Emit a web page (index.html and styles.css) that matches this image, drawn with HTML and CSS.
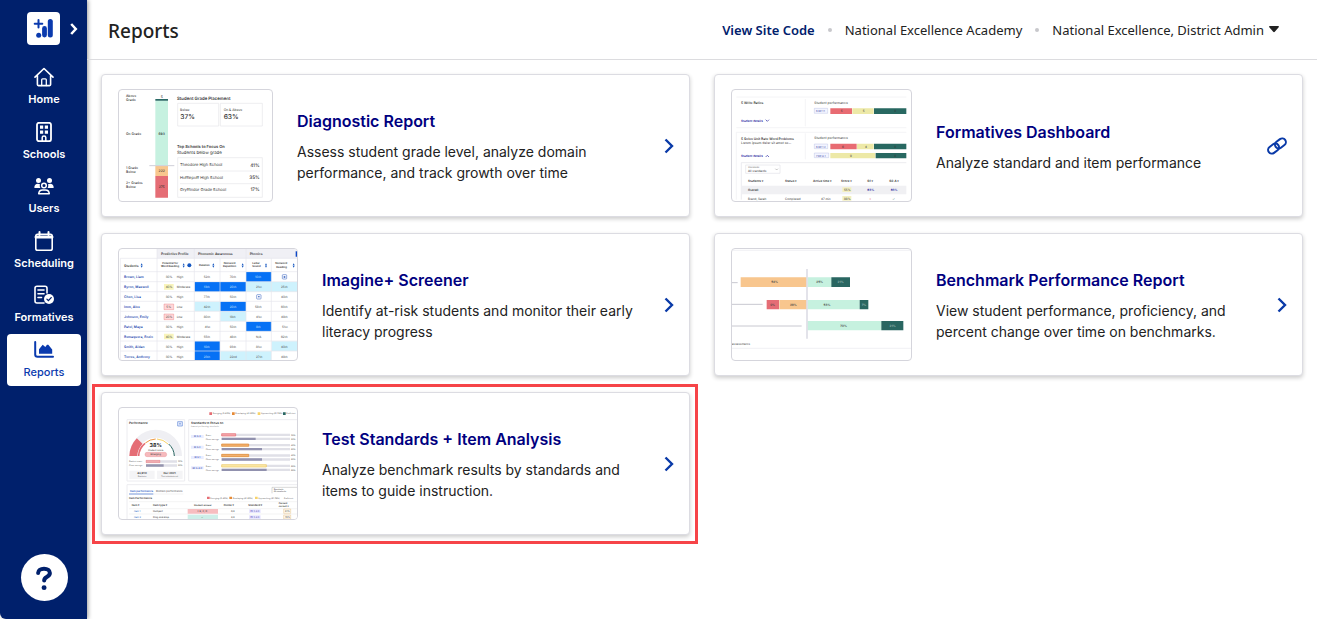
FILE: index.html
```html
<!DOCTYPE html>
<html lang="en">
<head>
<meta charset="utf-8">
<meta name="viewport" content="width=device-width, initial-scale=1">
<title>Reports</title>
<link rel="stylesheet" href="styles.css">
</head>
<body>
<div class="app">
  <aside class="sidebar">
    <div class="brand">
      <a class="logo" href="#" aria-label="Imagine">
        <svg viewBox="0 0 33 33" width="33" height="33" fill="none" stroke="#0a3aae" stroke-linecap="round">
          <path d="M11.500 8v7.500M7.700 11.700h7.600" stroke-width="2"/>
          <path d="M17.500 16.500v6.500" stroke-width="4.800"/>
          <path d="M23.300 9.500v13.500" stroke-width="5"/>
          <circle cx="11.700" cy="23.200" r="2.500" fill="#0a3aae" stroke="none"/>
        </svg>
      </a>
      <button class="expand" type="button" aria-label="Expand menu">
        <svg viewBox="0 0 8 12" width="8" height="12" fill="none" stroke="#fff" stroke-width="2.500"><path d="M1.200 1l4.600 5-4.600 5"/></svg>
      </button>
    </div>
    <nav>
      <ul class="menu">
        <li><a class="menu-item" href="#">
          <svg class="menu-icon" viewBox="0 0 20 20" fill="none" stroke="#fff" stroke-width="1.600" stroke-linejoin="round" stroke-linecap="round"><path d="M1 10.200L10 1.500l9 8.700M3.400 8.600v9c0 .7.300 1 1 1h11.200c.7 0 1-.3 1-1v-9"/><path d="M7.700 18.500v-5.700c0-.6.300-.9.900-.9h2.800c.6 0 .9.300.9.900v5.700" stroke-width="1.300"/></svg>
          <span>Home</span></a></li>
        <li><a class="menu-item" href="#">
          <svg class="menu-icon" viewBox="0 0 20 20" fill="none" stroke="#fff"><rect x="3" y=".8" width="14" height="18.400" rx="2" stroke-width="1.800"/><path d="M6 3.600h3.200v3.200H6zM10.800 3.600H14v3.200h-3.200zM6 8.600h3.200v3.200H6zM10.800 8.600H14v3.200h-3.200z" fill="#fff" stroke="none"/><path d="M8.200 19v-3.500c0-1 .8-1.500 1.800-1.500s1.800.500 1.800 1.500V19" stroke-width="1.500"/></svg>
          <span>Schools</span></a></li>
        <li><a class="menu-item" href="#">
          <svg class="menu-icon" viewBox="0 0 20 20" fill="#fff"><circle cx="4.500" cy="4.500" r="2.500"/><circle cx="15.500" cy="4.500" r="2.500"/><path d="M.3 11.500c0-2.500 1.500-3.800 3.500-3.800 1 0 1.600.2 2.200.6-.5 1.400-.3 2.500.4 3.600H.6zM19.700 11.500c0-2.500-1.500-3.800-3.500-3.800-1 0-1.600.2-2.200.6.500 1.400.3 2.500-.4 3.600h5.800z"/><circle cx="10" cy="9.500" r="2.300" fill="none" stroke="#fff" stroke-width="1.500"/><path d="M4.700 17.700c.3-2.500 1.700-3.600 3.800-3.600h3c2.100 0 3.500 1.100 3.800 3.600z" fill="none" stroke="#fff" stroke-width="1.500" stroke-linejoin="round"/></svg>
          <span>Users</span></a></li>
        <li><a class="menu-item" href="#">
          <svg class="menu-icon" viewBox="0 0 20 20" fill="none" stroke="#fff" stroke-width="1.600" stroke-linecap="round"><rect x="1.800" y="3.200" width="16.400" height="16" rx="1.800"/><path d="M2 6h16" stroke-width="3"/><path d="M5.500 1v3M14.500 1v3" stroke-width="2"/></svg>
          <span>Scheduling</span></a></li>
        <li><a class="menu-item" href="#">
          <svg class="menu-icon" viewBox="0 0 20 20" fill="none" stroke="#fff" stroke-width="1.600" stroke-linecap="round"><path d="M10 18H3c-1.200 0-2-.8-2-2V3.200C1 2 1.800 1.200 3 1.200h8c1.200 0 2 .8 2 2V8"/><path d="M4 5h6M4 8.700h6M4 12.500h3.500"/><circle cx="15" cy="14" r="5" fill="#fff" stroke="none"/><path d="M12.900 14.100l1.500 1.500 2.800-3" stroke="#00206c" stroke-width="1.300"/></svg>
          <span>Formatives</span></a></li>
        <li><a class="menu-item menu-item-active" href="#" aria-current="page">
          <svg class="menu-icon" viewBox="0 0 20 20" fill="none"><path d="M1.200 2v12.500c0 1.500.8 2.300 2.300 2.300H19" stroke="#0a3aae" stroke-width="2" stroke-linecap="round"/><path d="M5 13.800V9.200l3.700-4.400 2.600 2.300 1.700-2.300h1.300l3.900 4.800v4.200z" fill="#0a3aae"/></svg>
          <span>Reports</span></a></li>
      </ul>
    </nav>
    <button class="help" type="button" aria-label="Help">
      <svg viewBox="0 0 24 28" width="22" height="26" fill="none" stroke="#00206c" stroke-width="4.400" stroke-linecap="round" stroke-linejoin="round"><path d="M5.600 8.600c0-3 2.600-4.800 6.400-4.800s6.400 2 6.400 4.800c0 2.300-1.500 3.300-3.400 4.400-1.900 1.100-2.800 1.800-2.800 3.800"/><circle cx="12.100" cy="24.500" r="2.700" fill="#00206c" stroke="none"/></svg>
    </button>
  </aside>

  <div class="page">
    <header class="topbar">
      <h1>Reports</h1>
      <div class="account">
        <a class="site-code" href="#">View Site Code</a>
        <span class="dot"></span>
        <span>National Excellence Academy</span>
        <span class="dot"></span>
        <button class="user-menu" type="button">National Excellence, District Admin
          <svg viewBox="0 0 10 7" width="10" height="7" fill="#222"><path d="M.8 0h8.400c.7 0 1 .7.500 1.200L5.800 5.800c-.4.500-1.200.500-1.600 0L.3 1.200C-.2.7.1 0 .8 0z"/></svg>
        </button>
      </div>
    </header>

    <main class="reports">
      <a class="card" href="#">
        <svg class="thumb thumb-narrow" viewBox="27 30 459 333" aria-hidden="true">
          <g font-size="10" font-weight="500" fill="#333">
            <text x="48" y="51">Above</text><text x="48" y="64">Grade</text>
            <text x="48" y="164">On Grade</text>
            <text x="48" y="266">1 Grade</text><text x="48" y="279">Below</text>
            <text x="48" y="312">2+ Grades</text><text x="48" y="325">Below</text>
          </g>
          <path fill="#c6f1e0" d="M136 62h38v195h-38z"/><path fill="#2a6a66" d="M136 57h38v5h-38z"/>
          <path fill="#f8c78e" d="M136 258h38v30h-38z"/><path fill="#e56d75" d="M136 288h38v65h-38z"/>
          <path stroke="#cfcfd8" stroke-width="3" d="M118 257h75"/>
          <g font-size="10" font-weight="500" fill="#333" text-anchor="middle"><text x="155" y="54">5</text><text x="155" y="164">693</text><text x="155" y="276">222</text><text x="155" y="325">275</text></g>
          <g fill="#fff" stroke="#e6e6ea" stroke-width="2"><path d="M203 70h123v68H203zM331 70h126v68H331zM203 233h254v119H203z"/><path d="M210 273h240M210 311h240"/></g>
          <g fill="#333"><text x="201" y="61" font-size="13" font-weight="600">Student Grade Placement</text><text x="210" y="94" font-size="10">Below</text><text x="341" y="94" font-size="10">On &amp; Above</text>
          <text x="211" y="118" font-size="20" font-weight="500">37%</text><text x="341" y="118" font-size="20" font-weight="500">63%</text>
          <text x="201" y="203" font-size="12" font-weight="600">Top Schools to Focus On</text><text x="201" y="221" font-size="13">Students below grade</text></g>
          <g font-size="12" fill="#333"><text x="210" y="259">Theodore High School</text><text x="210" y="296">Hufflepuff High School</text><text x="210" y="333">Gryffindor Grade School</text></g>
          <g font-size="14" font-weight="500" fill="#333" text-anchor="end"><text x="449" y="260">41%</text><text x="449" y="297">35%</text><text x="449" y="334">17%</text></g>
        </svg>
        <div class="card-text"><h2>Diagnostic Report</h2><p>Assess student grade level, analyze domain performance, and track growth over time</p></div>
        <svg class="chevron" viewBox="0 0 10 16"><path d="M1.500 1.500L8 8l-6.500 6.500"/></svg>
      </a>

      <a class="card" href="#">
        <svg class="thumb thumb-wide" viewBox="21 30 537 333" aria-hidden="true">
          <path stroke="#eeeef2" stroke-width="2" d="M34 51h510M34 143h510M34 157h510M34 157v202M241 57v82M241 160v78" fill="none"/>
          <g font-size="10" font-weight="600" fill="#333"><text x="48" y="73">5 Write Ratios</text><text x="48" y="179">5 Solve Unit Rate Word Problems</text><text x="48" y="192" font-weight="400">Lorem ipsum dolor sit amet ex...</text></g>
          <g font-size="10" fill="#333"><text x="268" y="71">Student performance</text><text x="268" y="178">Student performance</text></g>
          <g font-size="9" font-weight="600" fill="#2525a0"><text x="48" y="125">Student details</text><text x="48" y="232">Student details</text></g>
          <g fill="none" stroke="#2525a0" stroke-width="2"><path d="M122 119l5 5 5-5M122 231l5-5 5 5"/></g>
          <g fill="#f3f5ff" stroke="#a4addb"><path d="M268 85h40v15h-40zM268 192h40v14h-40zM268 219h43v14h-43z"/></g>
          <g font-size="8" fill="#3a4aa5"><text x="273" y="96">6.RP.1.1</text><text x="273" y="203">6.RP.1.2</text><text x="273" y="230">7.RP.A.1</text></g>
          <path fill="#e86b72" d="M316 85h65v17h-65zM316 191h79v17h-79z"/><path fill="#ede9a7" d="M382 85h64v17h-64zM396 191h50v17h-50zM316 219h135v16H316z"/><path fill="#286861" d="M447 85h97v17h-97zM447 191h97v17h-97zM452 219h92v16h-92z"/>
          <g font-size="9" fill="#333"><text x="347" y="97">5</text><text x="413" y="97">5</text><text x="508" y="97">9</text><text x="351" y="203">6</text><text x="420" y="203">4</text><text x="508" y="203">9</text><text x="375" y="230">9</text><text x="508" y="230">8</text></g>
          <path fill="#fff" stroke="#e2e2e8" stroke-width="2" d="M49 248h495M49 248v111M62 255h103v25H62z"/>
          <text x="69" y="264" font-size="7" fill="#777">Standards</text><text x="69" y="275" font-size="9" fill="#333">All standards</text><path d="M151 266l4 4 4-4" fill="none" stroke="#555"/>
          <path fill="#f0f0f3" d="M50 317h494v26H50z"/><path fill="#f3efc0" d="M352 322h27v14h-27zM352 348h27v14h-27z"/>
          <g font-size="9" font-weight="600" fill="#333"><text x="69" y="307">Students ▾</text><text x="180" y="307">Status ▾</text><text x="264" y="307">Active time ▾</text><text x="348" y="307">Score ▾</text><text x="427" y="307">G1 ▾</text><text x="493" y="307">G2.A ▾</text><text x="69" y="332">Overall</text></g>
          <g font-size="9" fill="#333"><text x="357" y="333">55%</text><text x="69" y="359">Brand, Sarah</text><text x="180" y="359">Completed</text><text x="288" y="359">47 min</text><text x="357" y="359">88%</text><g fill="#2525a0" font-weight="600"><text x="427" y="332">63%</text><text x="497" y="332">63%</text></g><text x="433" y="359" fill="#d33">×</text><text x="502" y="359" fill="#286861">✓</text></g>
        </svg>
        <div class="card-text"><h2>Formatives Dashboard</h2><p>Analyze standard and item performance</p></div>
        <svg class="link-icon" viewBox="0 0 20 16"><g transform="rotate(-37 10 8)"><rect x="-.2" y="4.300" width="11.800" height="7.400" rx="3.700"/><rect x="8.400" y="4.300" width="11.800" height="7.400" rx="3.700"/></g></svg>
      </a>

      <a class="card" href="#">
        <svg class="thumb" viewBox="27 27 534 333" aria-hidden="true">
          <path fill="#f0f0f5" d="M141 27h420v28H141z"/><path fill="#0d47c7" d="M557 34h6v16h-6z"/>
          <path fill="#0671f5" d="M408 96h76v29h-76zM254 126h154v29H254zM331 185h77v29h-77zM408 245h76v29h-76zM254 304h76v56h-76z"/>
          <path fill="#cef2fd" d="M408 126h153v29H408zM254 185h76v29h-76zM331 215h77v29h-77zM485 304h76v29h-76zM331 334h153v26H331z"/>
          <path fill="none" stroke="#e5e5ed" stroke-width="2" d="M31 55h530M31 95h530M31 125h530M31 155h530M31 184h530M31 214h530M31 244h530M31 274h530M31 303h530M31 333h530M141 27v333M253 27v333M330 55v305M408 27v333M484 55v305M31 55v305"/>
          <g font-size="10" font-weight="600" fill="#333"><text x="153" y="44">Predictive Profile</text><text x="264" y="44">Phonemic Awareness</text><text x="419" y="44">Phonics</text><text x="42" y="80">Students</text></g>
          <g font-size="8" font-weight="600" fill="#333"><text x="157" y="72">Potential for</text><text x="153" y="82">Word Reading</text><text x="267" y="79">Deletion</text><text x="341" y="72">Nonword</text><text x="339" y="82">Repetition</text><text x="427" y="72">Letter</text><text x="427" y="82">Sound</text><text x="496" y="73">Nonword</text><text x="499" y="83">Reading</text></g>
          <g fill="#1456c0"><circle cx="238" cy="76" r="6"/><path d="M92 76l3-6 3 6zm0 1l3 6 3-6zM218 76l3-6 3 6zm0 1l3 6 3-6zM307 76l3-6 3 6zm0 1l3 6 3-6zM395 76l3-6 3 6zm0 1l3 6 3-6zM465 76l3-6 3 6zm0 1l3 6 3-6zM548 76l3-6 3 6zm0 1l3 6 3-6z"/></g>
          <g font-size="10" font-weight="600" fill="#2348ad"><text x="42" y="115">Brown, Liam</text><text x="42" y="144">Byron, Maxwell</text><text x="42" y="174">Chen, Lisa</text><text x="42" y="204">Imm, Alex</text><text x="42" y="233">Johnson, Emily</text><text x="42" y="263">Patel, Maya</text><text x="42" y="293">Remaquera, Enzio</text><text x="42" y="323">Smith, Aidan</text><text x="42" y="353">Torres, Anthony</text></g>
          <path fill="#f8f4bb" d="M162 132h29v17h-29zM162 281h29v17h-29z"/><path fill="#ffd7d8" stroke="#e5686e" d="M162 192h29v17h-29zM162 222h29v17h-29z"/>
          <g font-size="9" fill="#444"><text x="167" y="114">30%</text><text x="200" y="114">High</text><text x="167" y="144">40%</text><text x="200" y="144">Moderate</text><text x="167" y="174">30%</text><text x="200" y="174">High</text><text x="169" y="204">5%</text><text x="200" y="204">Low</text><text x="167" y="233">20%</text><text x="200" y="233">Low</text><text x="167" y="263">30%</text><text x="200" y="263">High</text><text x="167" y="293">40%</text><text x="200" y="293">Moderate</text><text x="167" y="323">30%</text><text x="200" y="323">High</text><text x="167" y="353">30%</text><text x="200" y="353">High</text>
          <text x="281" y="114">52th</text><text x="359" y="114">70th</text><text x="281" y="174">77th</text><text x="359" y="174">50th</text><text x="281" y="204">42th</text><text x="281" y="233">80th</text><text x="359" y="233">18th</text><text x="284" y="263">41st</text><text x="359" y="263">50th</text><text x="281" y="293">55th</text><text x="359" y="293">48th</text><text x="359" y="323">93th</text><text x="359" y="353">22nd</text>
          <text x="438" y="144">21st</text><text x="435" y="204">58th</text><text x="438" y="233">41st</text><text x="438" y="293">N/A</text><text x="438" y="323">81st</text><text x="438" y="353">27th</text><text x="513" y="144">25th</text><text x="513" y="174">40th</text><text x="513" y="204">63th</text><text x="513" y="233">49th</text><text x="516" y="263">51st</text><text x="513" y="293">62th</text><text x="513" y="323">40th</text><text x="513" y="353">49th</text></g>
          <g font-size="9" fill="#d6e8ff"><text x="435" y="114">10th</text><text x="281" y="144">13th</text><text x="359" y="144">20th</text><text x="359" y="204">20th</text><text x="438" y="263">8th</text><text x="281" y="323">10th</text><text x="281" y="353">23th</text></g>
          <g fill="none" stroke="#2756ba" stroke-width="1.500"><rect x="517" y="104" width="13" height="13" rx="2"/><rect x="440" y="164" width="13" height="13" rx="2"/></g><path fill="#2756ba" d="M521 109h5v4h-5zM444 169h5v3h-5z"/>
        </svg>
        <div class="card-text"><h2>Imagine+ Screener</h2><p>Identify at-risk students and monitor their early literacy progress</p></div>
        <svg class="chevron" viewBox="0 0 10 16"><path d="M1.500 1.500L8 8l-6.500 6.500"/></svg>
      </a>

      <a class="card" href="#">
        <svg class="thumb thumb-wide" viewBox="21 27 537 333" aria-hidden="true">
          <path stroke="#c8c8d0" stroke-width="3" d="M21 128h17M21 193h92M21 258h209"/>
          <path fill="#f8c68e" d="M47 112h199v29H47zM163 180h83v28h-83z"/><path fill="#c6f1df" d="M247 112h72v29h-72zM247 180h157v28H247zM247 243h222v28H247z"/>
          <path fill="#296661" d="M319 112h56v29h-56zM404 180h26v28h-26zM469 243h66v28h-66z"/><path fill="#e56d75" d="M125 180h37v28h-37z"/>
          <path stroke="#dedee6" stroke-width="5" d="M246 87v209"/><path stroke="#e9e9ee" stroke-width="2" d="M21 325h537M21 31h537"/>
          <g font-size="9" font-weight="600" fill="#444" text-anchor="middle"><text x="149" y="130">54%</text><text x="284" y="130">25%</text><text x="205" y="198">20%</text><text x="143" y="198">9%</text><text x="306" y="198">53%</text><text x="356" y="260">79%</text><g fill="#9fbab8"><text x="347" y="130">21%</text><text x="417" y="198">7%</text><text x="503" y="260">21%</text></g></g>
          <text x="20" y="316" font-size="9" fill="#444">assessments</text>
        </svg>
        <div class="card-text"><h2>Benchmark Performance Report</h2><p>View student performance, proficiency, and percent change over time on benchmarks.</p></div>
        <svg class="chevron" viewBox="0 0 10 16"><path d="M1.500 1.500L8 8l-6.500 6.500"/></svg>
      </a>

      <a class="card card-highlight" href="#">
        <svg class="thumb" viewBox="27 24 534 333" aria-hidden="true">
          <g fill="#fff" stroke="#ececf0" stroke-width="3"><path d="M51 59h173v184H51zM236 59h330v184H236zM51 254h515v110H51z"/></g>
          <path fill="#e56d75" d="M298 37h8v8h-8zM291 290h8v7h-8z"/><path fill="#e68a37" d="M366 37h8v8h-8zM358 290h8v7h-8z"/><path fill="#f7d36a" d="M443 37h8v8h-8zM435 290h8v7h-8z"/><path fill="#296661" d="M519 37h8v8h-8z"/>
          <g font-size="6" fill="#444"><text x="308" y="43">Emerging (0-40%)</text><text x="376" y="43">Developing (41-60%)</text><text x="453" y="43">Approaching (61-79%)</text><text x="529" y="43">Proficient</text><text x="301" y="296">Emerging (0-40%)</text><text x="368" y="296">Developing (41-60%)</text><text x="445" y="296">Approaching (61-79%)</text><text x="522" y="296">Proficient</text></g>
          <g font-size="9" font-weight="600" fill="#333"><text x="57" y="73">Performance</text><text x="243" y="73">Standards to Focus on</text><text x="57" y="296" font-size="8">Item Performance</text></g><text x="243" y="81" font-size="6" fill="#777">Lowest performing standards</text>
          <path fill="#e9efff" stroke="#618ad6" stroke-width="2" d="M203 65h14v13h-14z"/><path d="M210 68v7M207 71h6" stroke="#2962c8"/>
          <path d="M70 168a67 67 0 01134 0" fill="none" stroke="#efeff3" stroke-width="24"/>
          <path d="M70 168a67 67 0 0119-45" fill="none" stroke="#e56d75" stroke-width="24"/>
          <g fill="none" stroke-width="3"><path d="M86 168a51 51 0 0119-38" stroke="#e56d75" stroke-width="5"/><path d="M106 129a51 51 0 0131-12" stroke="#ed9844"/><path d="M141 117a51 51 0 0133 15" stroke="#f7d36a"/><path d="M176 132a51 51 0 0117 36" stroke="#296661"/></g>
          <text x="137" y="141" font-size="16" font-weight="700" text-anchor="middle" fill="#222">38%</text><text x="137" y="152" font-size="7" text-anchor="middle" fill="#444">Student score</text>
          <rect x="105" y="157" width="65" height="13" rx="6" fill="#f6b9bc" stroke="#e48287"/><text x="137" y="166" font-size="7" text-anchor="middle" fill="#333">Emerging</text>
          <g font-size="6" fill="#444"><text x="57" y="187">Student score</text><text x="57" y="199">Class average</text><text x="204" y="187">38%</text><text x="204" y="199">50%</text></g>
          <path fill="#e0e0e8" d="M108 181h93v7h-93zM108 193h93v7h-93z"/><path fill="#f0adb0" stroke="#e56d75" d="M108 181h42v7h-42z"/><path fill="#9494ae" d="M108 193h53v7h-53z"/>
          <path fill="#f4f4f6" d="M58 212h76v25H58zM141 212h77v25h-77z"/>
          <g font-size="8" font-weight="600" text-anchor="middle" fill="#333"><text x="96" y="222">43,850</text><text x="179" y="222">Dec 2025</text></g><g font-size="6" text-anchor="middle" fill="#444"><text x="96" y="231">Students</text><text x="179" y="231">Test administered</text></g>
          <path fill="#e8ecff" d="M243 105h38v9h-38zM243 137h38v9h-38zM243 168h38v9h-38zM243 199h38v9h-38z"/>
          <g font-size="7" font-weight="600" text-anchor="middle" fill="#3c4faf"><text x="262" y="112">RI.5.2</text><text x="262" y="144">RI.5.3</text><text x="262" y="175">RI.5.1</text><text x="262" y="206">RF.5.4.C</text></g>
          <g font-size="6" fill="#444"><text x="287" y="107">Score</text><text x="287" y="119">Class average</text><text x="287" y="138">Score</text><text x="287" y="150">Class average</text><text x="287" y="169">Score</text><text x="287" y="181">Class average</text><text x="287" y="200">Score</text><text x="287" y="212">Class average</text><text x="543" y="107">25%</text><text x="543" y="119">50%</text><text x="543" y="138">40%</text><text x="543" y="150">60%</text><text x="543" y="169">40%</text><text x="543" y="181">60%</text><text x="543" y="200">65%</text><text x="543" y="212">65%</text></g>
          <path fill="#e0e0e7" d="M335 101h205v7H335zM335 113h205v7H335zM335 132h205v7H335zM335 144h205v7H335zM335 163h205v7H335zM335 175h205v7H335zM335 194h205v7H335zM335 206h205v7H335z"/>
          <path fill="#f4a7aa" stroke="#e56d75" stroke-width="2" d="M335 101h42v7h-42z"/><path fill="#f2b06e" stroke="#dd872e" stroke-width="2" d="M335 132h81v7h-81zM335 163h81v7h-81z"/><path fill="#fbe9a9" stroke="#efc864" stroke-width="2" d="M335 194h134v7H335z"/><path fill="#9191ae" d="M335 113h102v7H335zM335 144h121v7H335zM335 175h121v7H335zM335 206h135v7H335z"/>
          <text x="60" y="275" font-size="8" font-weight="600" fill="#2458c4">Item performance</text><text x="138" y="275" font-size="8" fill="#444">Domain performance</text><path stroke="#2d62c6" stroke-width="2" d="M57 282h73"/><path stroke="#ddd" d="M130 282h90M57 305h504M57 326h504M57 342h504"/>
          <path fill="none" stroke="#888" d="M486 262h75M486 262v18"/><text x="491" y="269" font-size="6">Standards</text><text x="491" y="277" font-size="6">All standards</text>
          <g font-size="8" font-weight="600" fill="#333"><text x="65" y="318">Item ▾</text><text x="129" y="318">Item type ▾</text><text x="252" y="318" font-size="7">Student answer</text><text x="341" y="318">Points ▾</text><text x="415" y="318">Standard ▾</text><text x="506" y="313" font-size="7">Percent</text><text x="506" y="322" font-size="7">correct ▾</text></g>
          <path fill="#f7bdc0" d="M233 327h91v14h-91z"/><path fill="#ceefe9" d="M233 344h91v13h-91z"/><path fill="#e8e6ff" d="M417 328h35v11h-35zM417 346h35v11h-35z"/><path fill="#fffaf0" stroke="#dfa657" d="M521 327h21v13h-21zM521 345h21v12h-21z"/>
          <g font-size="7" fill="#333"><text x="72" y="336" fill="#245ac0">Item 1</text><text x="72" y="354" fill="#245ac0">Item 2</text><text x="129" y="336">Multipart</text><text x="129" y="354">Drag and drop</text><text x="262" y="336">× B, C, D</text><text x="274" y="354">✓</text><text x="363" y="336">0/2</text><text x="363" y="354">2/2</text><text x="421" y="336" fill="#4c42b1">RF.5.4.C</text><text x="421" y="354" fill="#4c42b1">RF.5.4.C</text><text x="525" y="336">61%</text><text x="525" y="354">70%</text></g>
        </svg>
        <div class="card-text"><h2>Test Standards + Item Analysis</h2><p>Analyze benchmark results by standards and items to guide instruction.</p></div>
        <svg class="chevron" viewBox="0 0 10 16"><path d="M1.500 1.500L8 8l-6.500 6.500"/></svg>
      </a>
    </main>
  </div>
</div>
</body>
</html>
```
FILE: styles.css
```css
* { box-sizing: border-box; }
body { margin: 0; background: #fff; color: #222; font-family: Inter, "Liberation Sans", sans-serif; }
button { border: 0; padding: 0; background: none; color: inherit; font: inherit; cursor: pointer; }
a { color: inherit; text-decoration: none; }
h1, h2, p { margin: 0; }
svg { display: block; }

.app { display: flex; min-height: 100vh; }
.sidebar {
  flex: 0 0 87px;
  display: flex;
  flex-direction: column;
  align-items: center;
  padding: 12px 6px 18px 7px;
  background: #00206c;
  border-bottom-left-radius: 6px;
  box-shadow: 1px 0 4px rgba(0, 0, 0, .4);
}
.brand { display: flex; align-items: center; align-self: flex-end; gap: 10px; padding-right: 3px; margin-bottom: 16px; }
.logo { background: #fff; border-radius: 4px; }
nav { width: 100%; }
.menu {
  display: grid;
  align-content: space-between;
  min-height: 325px;
  margin: 0;
  padding: 0;
  list-style: none;
}
.menu-item {
  display: flex;
  flex-direction: column;
  align-items: center;
  gap: 4px;
  height: 52px;
  padding-top: 6px;
  border-radius: 4px;
  color: #fff;
  font-size: 11px;
  font-weight: 600;
  line-height: 16px;
}
.menu-icon { width: 20px; height: 20px; }
.menu-item-active { background: #fff; color: #0a3aae; font-weight: 500; }
.help {
  display: grid;
  place-items: center;
  width: 47px;
  height: 47px;
  margin-top: auto;
  border-radius: 50%;
  background: #fff;
}

.page { flex: 1; min-width: 0; }
.topbar {
  display: flex;
  align-items: center;
  justify-content: space-between;
  min-height: 60px;
  padding: 0 38px 0 21px;
  border-bottom: 1px solid #dcdcdf;
  font-family: "Noto Sans", "Open Sans", sans-serif;
}
h1 { padding-top: 2px; font-size: 19px; font-weight: 500; line-height: 28px; }
.account { display: flex; align-items: center; gap: 13px; font-size: 13px; line-height: 20px; }
.site-code { color: #00206c; font-weight: 600; }
.dot { width: 4px; height: 4px; border-radius: 50%; background: #c8c8cc; }
.user-menu { display: flex; align-items: center; gap: 5px; }

.reports { display: grid; grid-template-columns: 1fr 1fr; gap: 16px 24px; padding: 14px; }
.card {
  position: relative;
  display: flex;
  align-items: center;
  gap: 24px;
  padding: 14px 15px 14px 16px;
  border: 1px solid #dcdce2;
  border-radius: 4px;
  background: #fff;
  box-shadow: 0 2px 4px rgba(0, 0, 0, .2);
}
.card-highlight::after { content: ""; position: absolute; inset: -9px -9px -10px -10px; border: 3px solid #f64448; pointer-events: none; }
.thumb { flex: none; width: 180px; height: 113px; border: 1px solid #d5d5dc; border-radius: 4px; text-rendering: geometricPrecision; }
.thumb-narrow { width: 155px; }
.thumb-wide { width: 181px; }
.card-text { flex: 1; display: grid; gap: 9px; padding-top: 3px; }
h2 { color: #000080; font-size: 16px; font-weight: 600; line-height: 21px; }
p { max-width: 324px; font-size: 14px; line-height: 21px; }
.chevron { width: 10px; height: 16px; fill: none; stroke: #0a3aa8; stroke-width: 2.4; }
.link-icon { width: 20px; height: 16px; overflow: visible; fill: none; stroke: #0a3aa8; stroke-width: 2; }
```
